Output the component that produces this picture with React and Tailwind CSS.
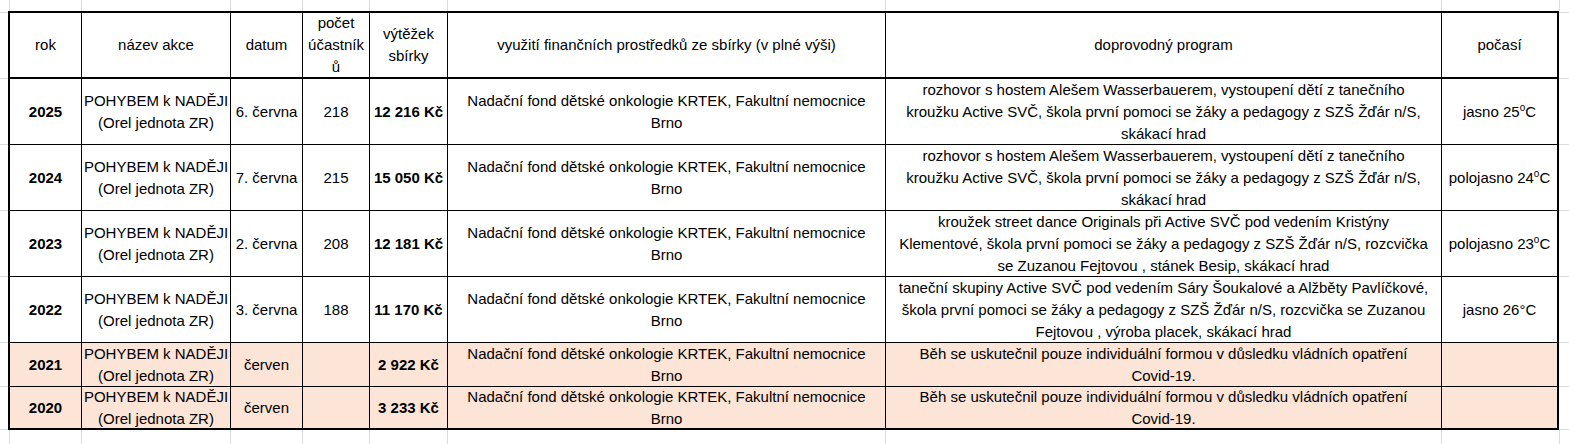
import React from "react";

const font = { fontFamily: '"Liberation Sans", Arial, sans-serif' };

const rows = [
  {
    rok: "2025",
    datum: "6. června",
    pocet: "218",
    vytezek: "12 216 Kč",
    program: [
      "rozhovor s hostem Alešem Wasserbauerem, vystoupení dětí z tanečního",
      "kroužku Active SVČ, škola první pomoci se žáky a pedagogy z SZŠ Žďár n/S,",
      "skákací hrad",
    ],
    pocasi: ["jasno 25", "sup"],
    h: "h",
  },
  {
    rok: "2024",
    datum: "7. června",
    pocet: "215",
    vytezek: "15 050 Kč",
    program: [
      "rozhovor s hostem Alešem Wasserbauerem, vystoupení dětí z tanečního",
      "kroužku Active SVČ, škola první pomoci se žáky a pedagogy z SZŠ Žďár n/S,",
      "skákací hrad",
    ],
    pocasi: ["polojasno 24", "sup"],
  },
  {
    rok: "2023",
    datum: "2. června",
    pocet: "208",
    vytezek: "12 181 Kč",
    program: [
      "kroužek street dance Originals při Active SVČ pod vedením Kristýny",
      "Klementové, škola první pomoci se žáky a pedagogy z SZŠ Žďár n/S, rozcvička",
      "se Zuzanou Fejtovou , stánek Besip, skákací hrad",
    ],
    pocasi: ["polojasno 23", "sup"],
  },
  {
    rok: "2022",
    datum: "3. června",
    pocet: "188",
    vytezek: "11 170 Kč",
    program: [
      "taneční skupiny Active SVČ pod vedením Sáry Šoukalové a Alžběty Pavlíčkové,",
      "škola první pomoci se žáky a pedagogy z SZŠ Žďár n/S, rozcvička se Zuzanou",
      "Fejtovou , výroba placek, skákací hrad",
    ],
    pocasi: ["jasno 26°C", "plain"],
  },
  {
    rok: "2021",
    datum: "červen",
    pocet: "",
    vytezek: "2 922 Kč",
    program: [
      "Běh se uskutečnil pouze individuální formou v důsledku vládních opatření",
      "Covid-19.",
    ],
    pocasi: null,
    fill: true,
  },
  {
    rok: "2020",
    datum: "červen",
    pocet: "",
    vytezek: "3 233 Kč",
    program: [
      "Běh se uskutečnil pouze individuální formou v důsledku vládních opatření",
      "Covid-19.",
    ],
    pocasi: null,
    fill: true,
    last: true,
  },
];

function Lines({ lines }) {
  return (
    <div className="flex flex-col items-center">
      {lines.map((l, i) => (
        <span key={i} className="whitespace-nowrap">
          {l}
        </span>
      ))}
    </div>
  );
}

function Cell({ children, last, bottom, bold, fill, header }) {
  const cls = [
    "flex items-center justify-center text-center overflow-visible",
    last ? "" : "border-r border-black",
    header ? "border-b-2 border-black" : bottom ? "" : "border-b border-black",
    bold ? "font-bold" : "",
    fill ? "bg-[#fce4d6]" : "bg-white",
  ].join(" ");
  return <div className={cls}>{children}</div>;
}

function GridStrip({ h }) {
  return (
    <div className={`flex ${h}`}>
      <div className="w-[10px] shrink-0 border-r border-[#dadada]" />
      <div className="w-[72px] shrink-0 border-r border-[#dadada]" />
      <div className="w-[149px] shrink-0 border-r border-[#dadada]" />
      <div className="w-[72px] shrink-0 border-r border-[#dadada]" />
      <div className="w-[67px] shrink-0 border-r border-[#dadada]" />
      <div className="w-[78px] shrink-0 border-r border-[#dadada]" />
      <div className="w-[438px] shrink-0 border-r border-[#dadada]" />
      <div className="w-[556px] shrink-0 border-r border-[#dadada]" />
      <div className="w-[118px] shrink-0 border-r border-[#dadada]" />
      <div className="flex-1" />
    </div>
  );
}

function SideStrip({ className }) {
  return (
    <div className={`flex flex-col ${className}`}>
      <div className="h-[2px] border-b border-[#dadada]" />
      <div className="h-[66px] border-b border-[#dadada]" />
      <div className="h-[66px] border-b border-[#dadada]" />
      <div className="h-[66px] border-b border-[#dadada]" />
      <div className="h-[66px] border-b border-[#dadada]" />
      <div className="h-[66px] border-b border-[#dadada]" />
      <div className="h-[44px] border-b border-[#dadada]" />
      <div className="h-[43px] border-b border-[#dadada]" />
    </div>
  );
}

export default function App() {
  return (
    <div
      className="w-[1569px] h-[444px] bg-white text-black text-[15px] leading-[22px] overflow-hidden flex flex-col"
      style={font}
    >
      <GridStrip h="h-[11px]" />
      <div className="flex h-[419px]">
        <SideStrip className="w-[8px] shrink-0" />
        <div className="w-[1551px] h-[419px] shrink-0 border-2 border-black grid grid-cols-[72px_149px_72px_67px_78px_438px_556px_115px] grid-rows-[66px_66px_66px_66px_66px_44px_41px]">
          <Cell header>rok</Cell>
          <Cell header>název akce</Cell>
          <Cell header>datum</Cell>
          <Cell header>
            <Lines lines={["počet", "účastník", "ů"]} />
          </Cell>
          <Cell header>
            <Lines lines={["výtěžek", "sbírky"]} />
          </Cell>
          <Cell header>využití finančních prostředků ze sbírky (v plné výši)</Cell>
          <Cell header>doprovodný program</Cell>
          <Cell header last>
            počasí
          </Cell>
          {rows.map((r) => (
            <React.Fragment key={r.rok}>
              <Cell bold fill={r.fill} bottom={r.last}>
                {r.rok}
              </Cell>
              <Cell fill={r.fill} bottom={r.last}>
                <Lines lines={["POHYBEM k NADĚJI", "(Orel jednota ZR)"]} />
              </Cell>
              <Cell fill={r.fill} bottom={r.last}>
                <span className="whitespace-nowrap">{r.datum}</span>
              </Cell>
              <Cell fill={r.fill} bottom={r.last}>
                {r.pocet}
              </Cell>
              <Cell bold fill={r.fill} bottom={r.last}>
                <span className="whitespace-nowrap">{r.vytezek}</span>
              </Cell>
              <Cell fill={r.fill} bottom={r.last}>
                <Lines lines={["Nadační fond dětské onkologie KRTEK, Fakultní nemocnice", "Brno"]} />
              </Cell>
              <Cell fill={r.fill} bottom={r.last}>
                <Lines lines={r.program} />
              </Cell>
              <Cell fill={r.fill} bottom={r.last} last>
                {r.pocasi ? (
                  r.pocasi[1] === "sup" ? (
                    <span className="whitespace-nowrap">
                      {r.pocasi[0]}
                      <sup className="text-[10px] top-[-0.55em]">o</sup>C
                    </span>
                  ) : (
                    <span className="whitespace-nowrap">{r.pocasi[0]}</span>
                  )
                ) : null}
              </Cell>
            </React.Fragment>
          ))}
        </div>
        <SideStrip className="flex-1" />
      </div>
      <GridStrip h="h-[14px]" />
    </div>
  );
}
